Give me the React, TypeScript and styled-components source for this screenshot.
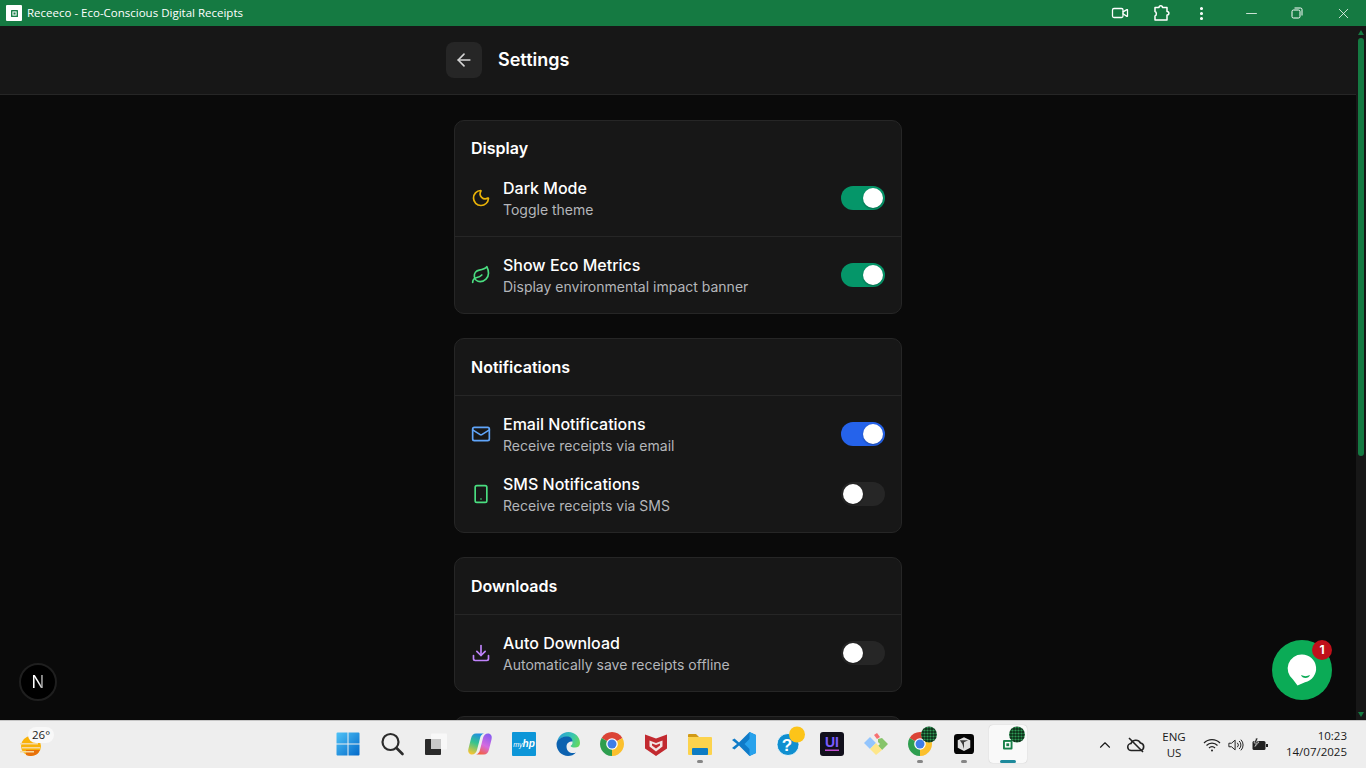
import type { ReactNode } from "react";
import styled, { createGlobalStyle } from "styled-components";
import {
  ArrowLeft,
  ChevronUp,
  Download,
  Leaf,
  Mail,
  Minus,
  Moon,
  MoreVertical,
  Smartphone,
  Video,
  X,
} from "lucide-react";

const GlobalStyle = createGlobalStyle`
  html, body {
    margin: 0;
    height: 100%;
    overflow: hidden;
    background: #0a0a0a;
  }
  * { box-sizing: border-box; }
`;

const Screen = styled.div`
  height: 768px;
  display: flex;
  flex-direction: column;
  font-family: Inter, "Liberation Sans", sans-serif;
`;

const TitleBar = styled.div`
  height: 26px;
  flex: none;
  display: flex;
  align-items: center;
  padding-left: 6px;
  background: #157a42;
  color: #fff;
`;

const AppTile = styled.div`
  width: 16px;
  height: 16px;
  border-radius: 1px;
  background: #fff;
  display: flex;
  align-items: center;
  justify-content: center;
  margin-right: 5px;
`;

const WindowTitle = styled.div`
  flex: 1;
  font-family: "Open Sans", "Liberation Sans", sans-serif;
  font-size: 11.5px;
  line-height: 26px;
`;

const TitleAction = styled.div<{ $width: number }>`
  width: ${(p) => p.$width}px;
  height: 26px;
  flex: none;
  display: flex;
  align-items: center;
  justify-content: center;
`;

const Body = styled.div`
  flex: 1;
  min-height: 0;
  display: flex;
`;

const ScrollArea = styled.div`
  flex: 1;
  min-width: 0;
  position: relative;
  overflow: hidden;
  background: #0a0a0a;
`;

const Header = styled.header`
  height: 69px;
  background: #171717;
  border-bottom: 1px solid #262626;
  padding: 16px 0;
`;

const HeaderInner = styled.div`
  width: 464px;
  margin: 0 auto;
  display: flex;
  align-items: center;
  gap: 16px;
`;

const BackButton = styled.button`
  width: 36px;
  height: 36px;
  padding: 0;
  border: 0;
  border-radius: 8px;
  background: #262626;
  color: #d4d4d4;
  display: flex;
  align-items: center;
  justify-content: center;
`;

const PageTitle = styled.h1`
  margin: 0;
  color: #fff;
  font-size: 18px;
  line-height: 28px;
  font-weight: 600;
`;

const Content = styled.main`
  width: 448px;
  margin: 0 auto;
  padding-top: 25px;
  display: flex;
  flex-direction: column;
  gap: 24px;
`;

const Card = styled.section<{ $tail?: boolean }>`
  background: #171717;
  border: 1px solid #262626;
  border-radius: 10px;
  min-height: ${(p) => (p.$tail ? "120px" : "0")};
`;

const CardHeading = styled.h2<{ $ruled: boolean }>`
  margin: 0;
  padding: ${(p) => (p.$ruled ? "16px" : "16px 16px 0")};
  color: #fff;
  font-size: 16px;
  line-height: ${(p) => (p.$ruled ? "24px" : "23px")};
  font-weight: 600;
  border-bottom: ${(p) => (p.$ruled ? "1px solid #262626" : "0")};
`;

const Rows = styled.div<{ $ruled: boolean }>`
  display: flex;
  flex-direction: column;
  gap: ${(p) => (p.$ruled ? "16px" : "0")};
  padding: ${(p) => (p.$ruled ? "16px" : "0")};
`;

const Row = styled.div<{ $divided: boolean }>`
  display: flex;
  align-items: center;
  gap: 12px;
  padding: ${(p) => (p.$divided ? "16px" : "0")};
  &:not(:first-child) {
    border-top: ${(p) => (p.$divided ? "1px solid #262626" : "0")};
  }
`;

const RowIcon = styled.div<{ $color: string }>`
  width: 20px;
  height: 20px;
  flex: none;
  color: ${(p) => p.$color};
  display: flex;
`;

const RowText = styled.div`
  flex: 1;
  min-width: 0;
`;

const RowTitle = styled.div`
  color: #fff;
  font-size: 16px;
  line-height: 24px;
  font-weight: 500;
`;

const RowHint = styled.div`
  color: #b4b6ba;
  font-size: 14px;
  line-height: 20px;
`;

const Toggle = styled.div<{ $on: boolean; $tone: string }>`
  width: 44px;
  height: 24px;
  flex: none;
  padding: 2px;
  border-radius: 12px;
  background: ${(p) => (p.$on ? p.$tone : "#262626")};
  display: flex;
  justify-content: ${(p) => (p.$on ? "flex-end" : "flex-start")};
`;

const Knob = styled.div`
  width: 20px;
  height: 20px;
  border-radius: 50%;
  background: #fff;
  box-shadow: 0 1px 2px rgba(0, 0, 0, 0.3);
`;

const DevBadge = styled.div`
  position: absolute;
  left: 19px;
  bottom: 19px;
  width: 38px;
  height: 38px;
  border-radius: 50%;
  background: #000;
  border: 2px solid #1f1f1f;
  display: flex;
  align-items: center;
  justify-content: center;
`;

const DevMark = styled.span`
  font-size: 17px;
  font-weight: 400;
  background: linear-gradient(to right, #fff 55%, #777);
  -webkit-background-clip: text;
  background-clip: text;
  color: transparent;
`;

const ChatBubble = styled.div`
  position: absolute;
  right: 24px;
  bottom: 20px;
  width: 60px;
  height: 60px;
  border-radius: 50%;
  background: #0bab56;
`;

const ChatCount = styled.div`
  position: absolute;
  top: 0;
  right: 0;
  width: 20px;
  height: 20px;
  border-radius: 50%;
  background: #c0101a;
  color: #fff;
  font-size: 12px;
  font-weight: 700;
  line-height: 20px;
  text-align: center;
`;

const ScrollTrack = styled.div`
  width: 10px;
  flex: none;
  background: #171717;
  display: flex;
  flex-direction: column;
  align-items: center;
`;

const ScrollArrow = styled.div<{ $down?: boolean }>`
  flex: none;
  width: 0;
  height: 0;
  margin: ${(p) => (p.$down ? "auto 0 3px" : "4px 0 3px")};
  border-left: 3.5px solid transparent;
  border-right: 3.5px solid transparent;
  border-${(p) => (p.$down ? "top" : "bottom")}: 5px solid #157a42;
`;

const ScrollThumb = styled.div`
  width: 6px;
  height: 418px;
  border-radius: 3px;
  background: #157a42;
`;

const Taskbar = styled.footer`
  height: 48px;
  flex: none;
  background: #eeeeee;
  border-top: 1px solid #c6c6c6;
  display: flex;
  color: #1a1a1a;
  font-family: "Open Sans", "Liberation Sans", sans-serif;
`;

const WeatherSlot = styled.div`
  width: 326px;
  flex: none;
  padding: 6px 0 0 20px;
  display: flex;
`;

const WeatherMark = styled.div`
  position: relative;
  width: 24px;
  height: 34px;
  padding-top: 8px;
`;

const Temperature = styled.div`
  position: absolute;
  left: 8px;
  top: 0;
  height: 16px;
  padding: 0 4px;
  border-radius: 8px;
  background: #f8f8f8;
  font-size: 11.5px;
  line-height: 15px;
`;

const TaskIcons = styled.div`
  display: flex;
  flex: none;
`;

const TaskSlot = styled.div<{ $active?: boolean }>`
  position: relative;
  width: 44px;
  height: 46px;
  display: flex;
  align-items: center;
  justify-content: center;
  &::before {
    content: "";
    display: ${(p) => (p.$active ? "block" : "none")};
    position: absolute;
    left: 3px;
    top: 4px;
    width: 38px;
    height: 38px;
    border-radius: 4px;
    background: #f9f9f9;
    box-shadow: 0 0 1px rgba(0, 0, 0, 0.25);
  }
  svg {
    position: relative;
    overflow: visible;
  }
`;

const RunDot = styled.span<{ $active?: boolean }>`
  position: absolute;
  bottom: 4px;
  left: 50%;
  width: ${(p) => (p.$active ? "16px" : "6px")};
  height: 3px;
  margin-left: ${(p) => (p.$active ? "-8px" : "-3px")};
  border-radius: 2px;
  background: ${(p) => (p.$active ? "#1e8a9c" : "#868686")};
`;

const Tray = styled.div`
  flex: 1;
  display: flex;
  align-items: center;
  padding-right: 19px;
`;

const TrayIcon = styled.div<{ $width: number; $end?: boolean }>`
  width: ${(p) => p.$width}px;
  flex: none;
  display: flex;
  justify-content: ${(p) => (p.$end ? "flex-end" : "center")};
`;

const Lang = styled.div`
  width: 32px;
  margin-right: 6px;
  flex: none;
  font-size: 11.5px;
  line-height: 16px;
  text-align: center;
`;

const Clock = styled.div`
  flex: 1;
  margin-top: -2px;
  font-size: 11.5px;
  line-height: 16px;
  text-align: right;
`;

// taskbar artwork, 24 unit box unless noted
const sector = (r: number, from: number, to: number) => {
  const p = (a: number) => `${12 + r * Math.cos((a * Math.PI) / 180)} ${12 + r * Math.sin((a * Math.PI) / 180)}`;
  return `M12 12L${p(from)}A${r} ${r} 0 0 1 ${p(to)}Z`;
};

const Art = ({ size = 24, children }: { size?: number; children: ReactNode }) => (
  <svg width={size} height={size} viewBox="0 0 24 24">
    {children}
  </svg>
);

const Chrome = () => (
  <>
    <path d={sector(12, 210, 330)} fill="#db4437" />
    <path d={sector(12, 330, 450)} fill="#fbc02d" />
    <path d={sector(12, 90, 210)} fill="#2e9e4f" />
    <circle cx="12" cy="12" r="5.8" fill="#fff" />
    <circle cx="12" cy="12" r="4.5" fill="#3f7de8" />
  </>
);

const ProfileDot = () => (
  <>
    <defs>
      <pattern id="mesh" width="3" height="3" patternUnits="userSpaceOnUse">
        <rect width="3" height="3" fill="#0c2e18" />
        <circle cx="1.5" cy="1.5" r="1.1" fill="#2f9a56" />
      </pattern>
    </defs>
    <circle cx="21" cy="2.5" r="8" fill="url(#mesh)" />
  </>
);

const ReceiptGlyph = ({ x, y, size }: { x: number; y: number; size: number }) => (
  <>
    <rect x={x} y={y} width={size} height={size} rx="1" fill="#188049" />
    <rect x={x + size * 0.2} y={y + size * 0.2} width={size * 0.6} height={size * 0.6} fill="#fff" />
    <rect x={x + size * 0.35} y={y + size * 0.35} width={size * 0.3} height={size * 0.3} fill="#188049" />
  </>
);

const taskApps: { key: string; dot?: boolean; active?: boolean; art: ReactNode }[] = [
  {
    key: "start",
    art: (
      <Art>
        <defs>
          <linearGradient id="win" x1="0" y1="0" x2="1" y2="1">
            <stop offset="0" stopColor="#4fc3f7" />
            <stop offset="1" stopColor="#0369c9" />
          </linearGradient>
        </defs>
        <path d="M.5 1.5a1 1 0 0 1 1-1H11.5V11.5H.5ZM12.5.5H22.5a1 1 0 0 1 1 1V11.5H12.5ZM.5 12.5H11.5V23.5H1.5a1 1 0 0 1-1-1ZM12.5 12.5H23.5V22.5a1 1 0 0 1-1 1H12.5Z" fill="url(#win)" />
      </Art>
    ),
  },
  {
    key: "search",
    art: (
      <Art>
        <circle cx="10.5" cy="10" r="8" fill="none" stroke="#2b2b2b" strokeWidth="2.2" />
        <path d="M16.5 16l6 6" stroke="#2b2b2b" strokeWidth="2.6" strokeLinecap="round" />
      </Art>
    ),
  },
  {
    key: "tasks",
    art: (
      <Art>
        <rect x="7" y="1.5" width="16" height="16" rx="1" fill="#f8f8f8" />
        <rect x="1" y="7" width="16" height="16" rx="1" fill="#2a2a2a" />
        <rect x="7" y="7" width="10" height="10" fill="#c8c8c8" />
      </Art>
    ),
  },
  {
    key: "copilot",
    art: (
      <Art>
        <defs>
          <linearGradient id="copA" x1="0.6" y1="0" x2="0.3" y2="1">
            <stop offset="0" stopColor="#1f8fe0" />
            <stop offset=".45" stopColor="#35c48e" />
            <stop offset="1" stopColor="#f7c531" />
          </linearGradient>
          <linearGradient id="copB" x1="0.7" y1="0" x2="0.3" y2="1">
            <stop offset="0" stopColor="#8a5cf0" />
            <stop offset=".55" stopColor="#d56ae0" />
            <stop offset="1" stopColor="#f4603c" />
          </linearGradient>
        </defs>
        <path d="M8 1.5h8c-2 .5-3.2 2-3.8 4L9 18c-.7 2.5-2.5 4.5-5 4.5-2.8 0-4.500-2.500-3.500-6L3 6.500C3.800 3.300 5.500 1.500 8 1.500Z" fill="url(#copA)" />
        <path d="M16 22.500H8c2-.5 3.200-2 3.800-4L15 6c.7-2.500 2.500-4.500 5-4.500 2.800 0 4.500 2.500 3.500 6L21 17.500c-.8 3.200-2.500 5-5 5Z" fill="url(#copB)" />
      </Art>
    ),
  },
  {
    key: "myhp",
    art: (
      <Art>
        <rect width="24" height="24" rx="1" fill="#0d96d8" />
        <text x="12" y="15" textAnchor="middle" fontFamily="Liberation Sans" fontStyle="italic" fill="#fff">
          <tspan fontSize="7">my</tspan>
          <tspan fontSize="10" fontWeight="700">hp</tspan>
        </text>
      </Art>
    ),
  },
  {
    key: "edge",
    art: (
      <Art>
        <defs>
          <linearGradient id="edge" x1="0" y1="0.3" x2="1" y2="0.6">
            <stop offset="0" stopColor="#2a9fd8" />
            <stop offset=".6" stopColor="#39c6b0" />
            <stop offset="1" stopColor="#63d85e" />
          </linearGradient>
        </defs>
        <path d="M1 12C1 5 6 0 12.500 0 19 0 24 5 24 11c0 3-2 4.500-5 4.500-2 0-4-.5-4.500-1.500 1-1 2-1.500 2-3.500C16.500 7 13 5 10 5 5 5 1 8 1 12Z" fill="url(#edge)" />
        <path d="M.5 12c0 7 5.500 12 11.500 12 3 0 6-1 8-3.500-4 1.500-9.500 0-9.500-6 0-3 2-5 6-5 0-3.500-3-5.500-6.500-5C5 5 .5 8 .5 12Z" fill="#0c62b0" />
      </Art>
    ),
  },
  { key: "chrome", art: <Art><Chrome /></Art> },
  {
    key: "mcafee",
    art: (
      <Art>
        <path d="M1 2.500l11 4 11-4v14L12 24 1 16.500Z" fill="#c22a30" />
        <path d="M5.500 8.500L12 11l6.500-2.500v6L12 19.500l-6.500-5Z" fill="#f2e4e4" />
        <path d="M8 11.500l4 1.500 4-1.500v2L12 16.500l-4-3Z" fill="#c22a30" />
      </Art>
    ),
  },
  {
    key: "files",
    dot: true,
    art: (
      <Art>
        <path d="M0 3a1 1 0 0 1 1-1h7l3 3H0Z" fill="#d29a16" />
        <rect y="5" width="24" height="18" rx="1" fill="#fcd34d" />
        <rect x="4" y="16" width="16" height="7" rx="1" fill="#0d7cc4" />
      </Art>
    ),
  },
  {
    key: "vscode",
    art: (
      <Art>
        <path d="M17.500 0L24 3v18l-6.500 3L7 13.500l-4.500 4L0 16l5-4-5-4 2.500-1.500 4.500 4Z" fill="#0f7bc8" />
        <path d="M17.500 0L24 3v18l-6.500 3V17l-5-5 5-5Z" fill="#28a2ec" />
      </Art>
    ),
  },
  {
    key: "help",
    art: (
      <Art>
        <circle cx="12" cy="12.500" r="11" fill="#0f8fd0" stroke="#fff" strokeWidth=".8" />
        <text x="11" y="19" textAnchor="middle" fontFamily="Liberation Sans" fontWeight="700" fontSize="17" fill="#fff">
          ?
        </text>
        <circle cx="21" cy="2.500" r="8" fill="#fcc419" />
      </Art>
    ),
  },
  {
    key: "ui",
    art: (
      <Art>
        <rect width="24" height="24" rx="3" fill="#12101c" />
        <text x="12" y="14.500" textAnchor="middle" fontFamily="Liberation Sans" fontWeight="700" fontSize="14" fill="#7c5cff">
          UI
        </text>
        <rect x="5" y="17.500" width="14" height="1.500" fill="#c04fd0" />
      </Art>
    ),
  },
  {
    key: "kite",
    art: (
      <Art>
        <path d="M10 3l3-2 3 4-3 2Z" fill="#f87171" />
        <path d="M0 11l6-6 6 6-6 6Z" fill="#93c5fd" />
        <path d="M14 7l4-1 6 6-6 6-4-4 2-2-2-2Z" fill="#86c46a" />
        <path d="M6 17l6-6 6 7-6 5Z" fill="#fde68a" />
      </Art>
    ),
  },
  {
    key: "profile-chrome",
    dot: true,
    art: (
      <Art>
        <Chrome />
        <ProfileDot />
      </Art>
    ),
  },
  {
    key: "cube",
    dot: true,
    art: (
      <Art size={20}>
        <rect width="24" height="24" rx="4" fill="#050505" />
        <path d="M12 4l7.500 3.500v9L12 20.500l-7.500-4v-9Z" fill="#dedede" />
        <path d="M7 7.500h10L12 10v8l-2-6Z" fill="#3a3a3a" />
      </Art>
    ),
  },
  {
    key: "receeco",
    dot: true,
    active: true,
    art: (
      <Art>
        <ReceiptGlyph x={7} y={8} size={9.5} />
        <ProfileDot />
      </Art>
    ),
  },
];

interface Setting {
  title: string;
  hint: string;
  icon: ReactNode;
  color: string;
  on: boolean;
  tone?: string;
}

const groups: { heading: string; divided?: boolean; items: Setting[] }[] = [
  {
    heading: "Display",
    divided: true,
    items: [
      { title: "Dark Mode", hint: "Toggle theme", icon: <Moon size={20} />, color: "#eab308", on: true },
      { title: "Show Eco Metrics", hint: "Display environmental impact banner", icon: <Leaf size={20} />, color: "#4ade80", on: true },
    ],
  },
  {
    heading: "Notifications",
    items: [
      { title: "Email Notifications", hint: "Receive receipts via email", icon: <Mail size={20} />, color: "#60a5fa", on: true, tone: "#2563eb" },
      { title: "SMS Notifications", hint: "Receive receipts via SMS", icon: <Smartphone size={20} />, color: "#4ade80", on: false },
    ],
  },
  {
    heading: "Downloads",
    items: [
      { title: "Auto Download", hint: "Automatically save receipts offline", icon: <Download size={20} />, color: "#c084fc", on: false },
    ],
  },
];

export default function App() {
  return (
    <Screen>
      <GlobalStyle />
      <TitleBar>
        <AppTile>
          <svg width="7" height="7" viewBox="0 0 12 12">
            <ReceiptGlyph x={0} y={0} size={12} />
          </svg>
        </AppTile>
        <WindowTitle>Receeco - Eco-Conscious Digital Receipts</WindowTitle>
        <TitleAction $width={60}>
          <Video size={18} strokeWidth={1.7} />
        </TitleAction>
        <TitleAction $width={24}>
          <svg width="18" height="18" viewBox="0 0 18 18" fill="none" stroke="#fff" strokeWidth="1.5" strokeLinejoin="round">
            <path d="M2 3.5h4c0-2.500 3.500-2.500 3.500 0h4.500v4c2.500 0 2.500 3.500 0 3.500v5H2v-4c1.800-.5 1.800-4 0-4.500Z" />
          </svg>
        </TitleAction>
        <TitleAction $width={54}>
          <MoreVertical size={17} strokeWidth={2.4} />
        </TitleAction>
        <TitleAction $width={46}>
          <Minus size={17} strokeWidth={1.1} />
        </TitleAction>
        <TitleAction $width={46}>
          <svg width="12" height="12" viewBox="0 0 12 12" fill="none" stroke="#fff" strokeWidth="1">
            <rect x="1" y="3" width="8" height="8" rx="1.5" />
            <path d="M3.5 1H9.500a1.500 1.500 0 0 1 1.500 1.500V8.500" />
          </svg>
        </TitleAction>
        <TitleAction $width={46}>
          <X size={17} strokeWidth={1.1} />
        </TitleAction>
      </TitleBar>

      <Body>
        <ScrollArea>
          <Header>
            <HeaderInner>
              <BackButton aria-label="Back">
                <ArrowLeft size={20} />
              </BackButton>
              <PageTitle>Settings</PageTitle>
            </HeaderInner>
          </Header>
          <Content>
            {groups.map((group) => (
              <Card key={group.heading}>
                <CardHeading $ruled={!group.divided}>{group.heading}</CardHeading>
                <Rows $ruled={!group.divided}>
                  {group.items.map((item) => (
                    <Row key={item.title} $divided={!!group.divided}>
                      <RowIcon $color={item.color}>{item.icon}</RowIcon>
                      <RowText>
                        <RowTitle>{item.title}</RowTitle>
                        <RowHint>{item.hint}</RowHint>
                      </RowText>
                      <Toggle $on={item.on} $tone={item.tone ?? "#059669"}>
                        <Knob />
                      </Toggle>
                    </Row>
                  ))}
                </Rows>
              </Card>
            ))}
            <Card $tail />
          </Content>
          <DevBadge>
            <DevMark>N</DevMark>
          </DevBadge>
          <ChatBubble>
            <svg width="60" height="60" viewBox="0 0 60 60">
              <path d="M30 14.500a14 14 0 0 1 3 27.700L25.500 45.500 21 39.500A14 14 0 0 1 30 14.500Z" fill="#fff" />
              <path d="M29 35c3 1.500 6 1.500 9 0-1 4-8 4-9 0Z" fill="#0bab56" />
            </svg>
            <ChatCount>1</ChatCount>
          </ChatBubble>
        </ScrollArea>
        <ScrollTrack>
          <ScrollArrow />
          <ScrollThumb />
          <ScrollArrow $down />
        </ScrollTrack>
      </Body>

      <Taskbar>
        <WeatherSlot>
          <WeatherMark>
            <svg width="22" height="22" viewBox="0 0 22 22">
              <circle cx="11" cy="11" r="10" fill="#f9b208" />
              <path d="M11 21a10 10 0 0 0 9-6H6v5a10 10 0 0 0 5 1Z" fill="#e8710a" />
              <path d="M0 8h18v1.500H0ZM2 12h18v1.500H2ZM0 16h14v1.500H0Z" fill="#f5d9a0" />
            </svg>
            <Temperature>26°</Temperature>
          </WeatherMark>
        </WeatherSlot>
        <TaskIcons>
          {taskApps.map((app) => (
            <TaskSlot key={app.key} $active={app.active}>
              {app.art}
              {app.dot && <RunDot $active={app.active} />}
            </TaskSlot>
          ))}
        </TaskIcons>
        <Tray>
          <TrayIcon $width={84} $end>
            <ChevronUp size={18} strokeWidth={1.5} />
          </TrayIcon>
          <TrayIcon $width={44}>
            <svg width="20" height="20" viewBox="0 0 20 20" fill="none" stroke="#222" strokeWidth="1.6">
              <path d="M5.500 15.500a3.500 3.500 0 0 1-.5-7C6 5 12 3.500 14.500 8a3.800 3.800 0 0 1 0 7.500Z" />
              <path d="M3 3l14 14" />
            </svg>
          </TrayIcon>
          <Lang>
            ENG
            <br />
            US
          </Lang>
          <TrayIcon $width={32}>
            <svg width="18" height="16" viewBox="0 0 18 16" fill="none" stroke="#222" strokeWidth="1.2">
              <path d="M1 6a11 11 0 0 1 16 0M3.500 8.500a7.500 7.500 0 0 1 11 0M6 11a4 4 0 0 1 6 0" />
              <circle cx="9" cy="13.500" r="1" fill="#222" stroke="none" />
            </svg>
          </TrayIcon>
          <TrayIcon $width={16}>
            <svg width="18" height="16" viewBox="0 0 18 16" fill="none" stroke="#222" strokeWidth="1.1">
              <path d="M1 6h3l4-3.500v11L4 10H1Z" />
              <path d="M10.500 5.500a3.500 3.500 0 0 1 0 5M12.500 3.500a6 6 0 0 1 0 9M14.500 2a8.500 8.500 0 0 1 0 12" />
            </svg>
          </TrayIcon>
          <TrayIcon $width={32}>
            <svg width="18" height="16" viewBox="0 0 18 16">
              <rect x="1.500" y="4" width="13" height="9" rx="1.500" fill="#222" />
              <rect x="15" y="7" width="2" height="3" fill="#222" />
              <path d="M5 1L3 6h2.500L4 9.500 8 5H5.500L7 1Z" fill="#222" stroke="#eee" strokeWidth=".6" />
            </svg>
          </TrayIcon>
          <Clock>
            10:23
            <br />
            14/07/2025
          </Clock>
        </Tray>
      </Taskbar>
    </Screen>
  );
}
